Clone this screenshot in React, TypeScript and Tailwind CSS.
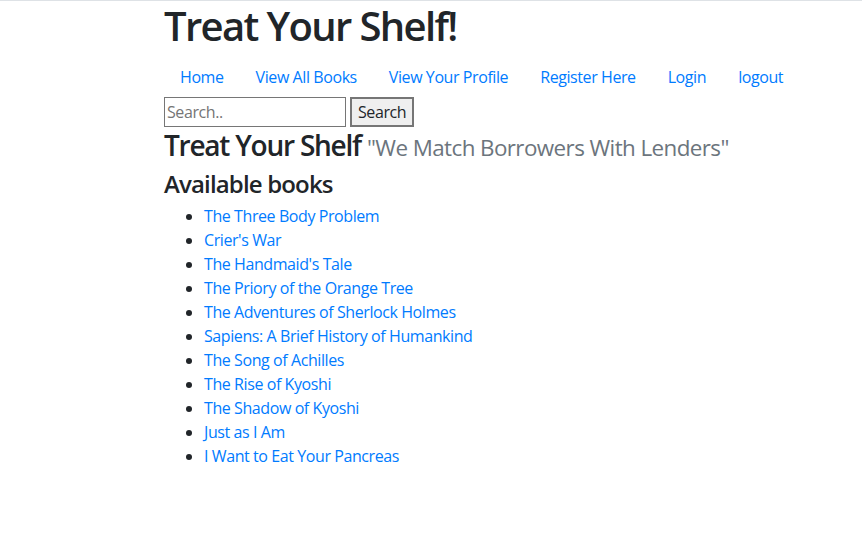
export default function App() {
  const books = [
    "The Three Body Problem",
    "Crier's War",
    "The Handmaid's Tale",
    "The Priory of the Orange Tree",
    "The Adventures of Sherlock Holmes",
    "Sapiens: A Brief History of Humankind",
    "The Song of Achilles",
    "The Rise of Kyoshi",
    "The Shadow of Kyoshi",
    "Just as I Am",
    "I Want to Eat Your Pancreas",
  ];
  const nav = ["Home", "View All Books", "View Your Profile", "Register Here", "Login", "logout"];

  return (
    <div className="min-h-[538px] bg-white border-t border-[#dee2e6] text-[#212529] font-['Open_Sans',sans-serif] tracking-[-0.026em]">
      <div className="pl-[164px]">
        <h1 className="text-[40px] leading-[50px] font-semibold tracking-[-0.041em] mb-[6px]">Treat Your Shelf!</h1>

        {/* navigation */}
        <ul className="flex">
          {nav.map((n) => (
            <li key={n}>
              <a href="#" className="block px-4 py-2 text-base leading-6 text-[#007bff]">
                {n}
              </a>
            </li>
          ))}
        </ul>

        <form className="flex items-center gap-1">
          <input
            placeholder="Search.."
            className="w-[182px] h-[30px] border border-[#767676] px-[2px] text-base placeholder:text-[#757575]"
          />
          <button type="button" className="h-[30px] px-[6px] bg-[#efefef] border-2 border-[#767676] text-base">
            Search
          </button>
        </form>

        <h3 className="text-[28px] leading-[36px] font-semibold tracking-[-0.044em] mb-1">
          Treat Your Shelf{" "}
          <small className="text-[80%] font-normal tracking-[-0.026em] text-[#6c757d]">"We Match Borrowers With Lenders"</small>
        </h3>

        <h4 className="text-2xl leading-[28px] font-semibold tracking-[-0.035em] mb-[6px]">Available books</h4>
        <ul className="list-disc pl-10">
          {books.map((b) => (
            <li key={b} className="text-base leading-6">
              <a href="#" className="text-[#007bff]">{b}</a>
            </li>
          ))}
        </ul>
      </div>
    </div>
  );
}
